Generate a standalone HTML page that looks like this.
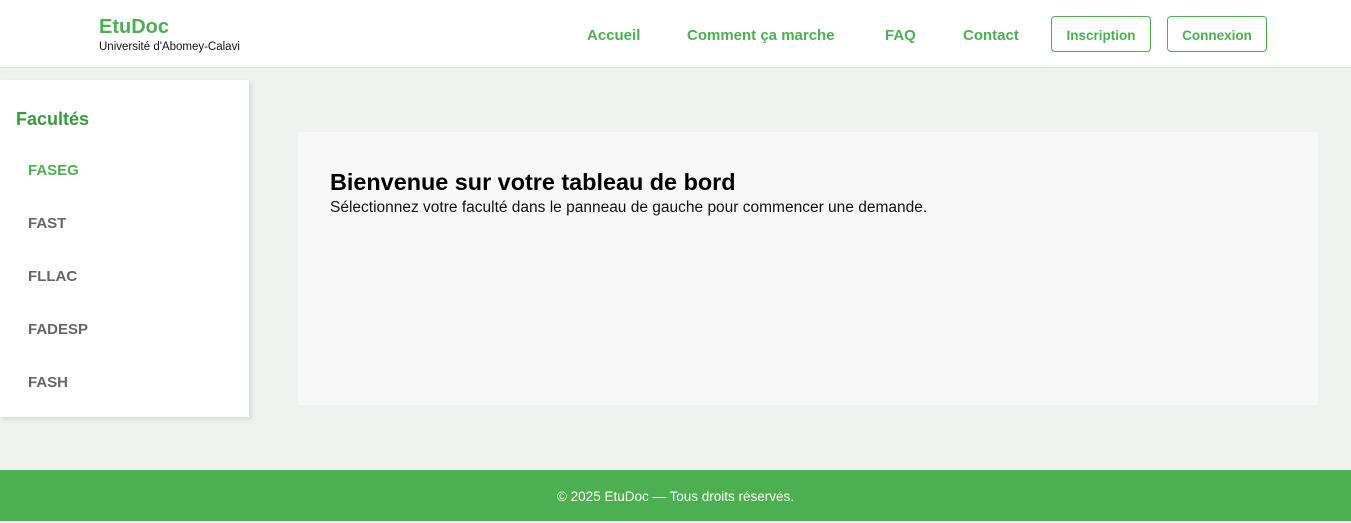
<!DOCTYPE html>
<html><head><meta charset="utf-8"><style>
*{margin:0;padding:0;box-sizing:border-box}
body{width:1351px;height:521px;background:#eff3f0;font-family:"Liberation Sans",sans-serif;position:relative;overflow:hidden}
.hdr{position:absolute;left:0;top:0;width:1351px;height:68px;background:#fff;border-bottom:1px solid #dde3df}
.logo{position:absolute;left:99px;top:16px;color:#4caf50;font-weight:bold;font-size:20px}
.sub{position:absolute;left:99px;top:41px;font-size:11.5px;color:#111}
.nav{position:absolute;top:27px;color:#4caf50;font-weight:bold;font-size:15px}
.btn{position:absolute;top:16px;height:36px;border:1px solid #4caf50;border-radius:4px;color:#4caf50;font-size:13.5px;font-weight:bold;text-align:center;line-height:37px;width:100px}
.side{position:absolute;left:0;top:80px;width:249px;height:337px;background:#fff;box-shadow:2px 2px 5px rgba(0,0,0,.12)}
.side h3{position:absolute;left:16px;top:29px;color:#3a9a40;font-size:18px}
.it{position:absolute;left:28px;font-weight:bold;font-size:15px;color:#666}
.card{position:absolute;left:298px;top:132px;width:1020px;height:273px;background:#f8f8f8}
.card h2{position:absolute;left:32px;top:37px;font-size:23.4px;color:#000}
.card p{position:absolute;left:32px;top:67px;font-size:15.5px;color:#111}
.ft{position:absolute;left:0;top:470px;width:1351px;height:51px;background:#4caf50;color:#fff;font-size:13.5px;text-align:center;line-height:53px}
</style></head><body>
<div class="hdr">
<div class="logo">EtuDoc</div>
<div class="sub">Université d'Abomey-Calavi</div>
<div class="nav" style="left:587px">Accueil</div>
<div class="nav" style="left:687px">Comment ça marche</div>
<div class="nav" style="left:885px">FAQ</div>
<div class="nav" style="left:963px">Contact</div>
<div class="btn" style="left:1051px">Inscription</div>
<div class="btn" style="left:1167px">Connexion</div>
</div>
<div class="side">
<h3>Facultés</h3>
<div class="it" style="top:82px;color:#4caf50">FASEG</div>
<div class="it" style="top:135px">FAST</div>
<div class="it" style="top:188px">FLLAC</div>
<div class="it" style="top:241px">FADESP</div>
<div class="it" style="top:294px">FASH</div>
</div>
<div class="card">
<h2>Bienvenue sur votre tableau de bord</h2>
<p>Sélectionnez votre faculté dans le panneau de gauche pour commencer une demande.</p>
</div>
<div class="ft">© 2025 EtuDoc — Tous droits réservés.</div>
</body></html>
